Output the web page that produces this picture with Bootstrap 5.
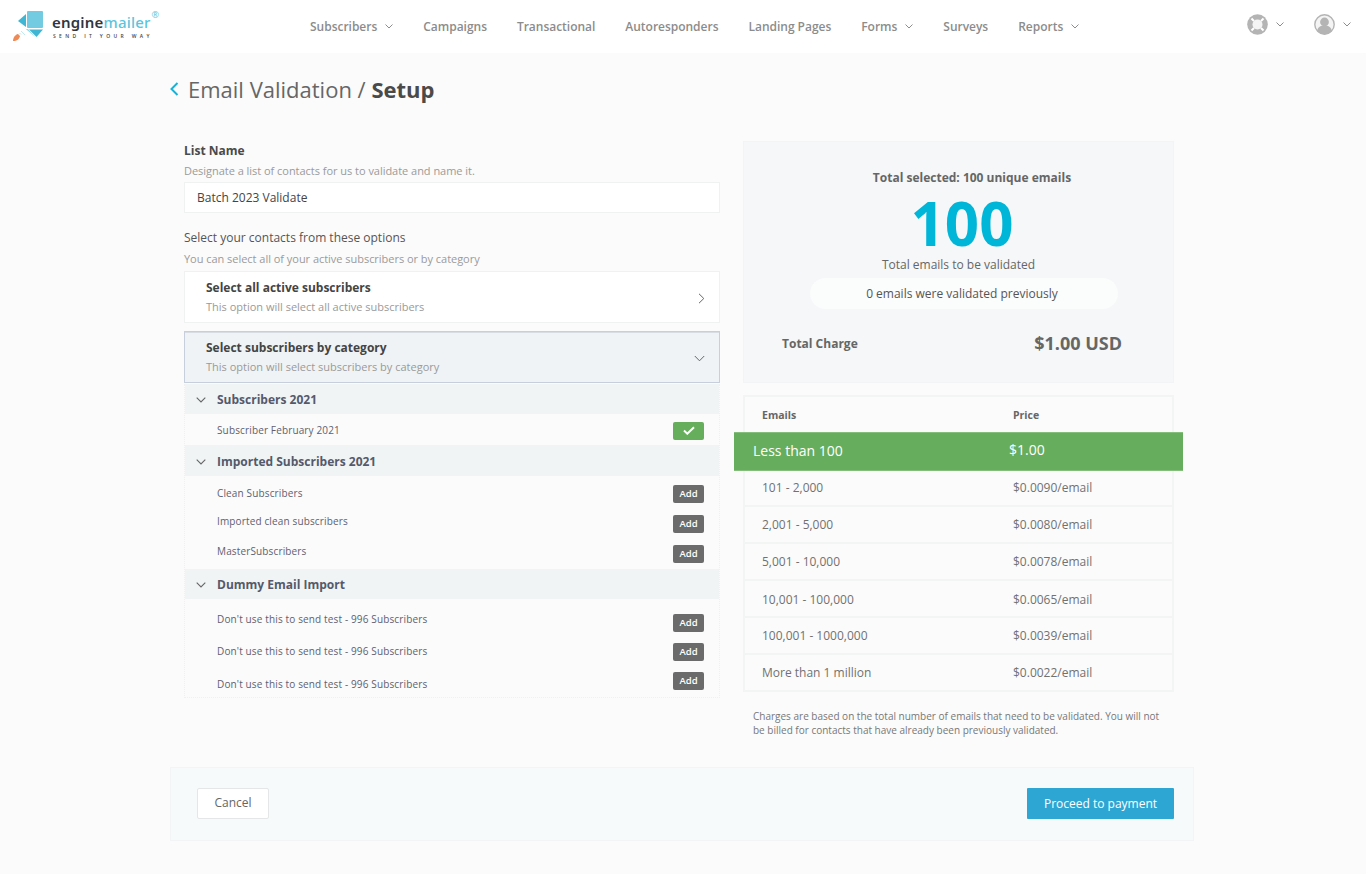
<!DOCTYPE html>
<html lang="en">
<head>
<meta charset="utf-8">
<title>Email Validation / Setup</title>
<link rel="stylesheet" href="https://cdn.jsdelivr.net/npm/bootstrap@5.3.0/dist/css/bootstrap.min.css">
<style>
body{background:#fbfbfb;font-family:"Open Sans",sans-serif;color:#555;font-size:12px;min-height:874px}
.em-top{height:53px;background:#fff;padding:0}
.em-brand{width:300px;margin:0;padding:0 0 0 12px;display:flex;align-items:center;height:53px;gap:2px}
.em-wordmark{display:flex;flex-direction:column;position:relative;width:104px;margin-left:3px}
.em-word{font:600 15px/18px "Noto Sans",sans-serif;color:#2f3640;letter-spacing:.2px}
.em-word b{font-weight:500;color:#5cc4dc}
.em-tag{font:600 5px/7px "Open Sans",sans-serif;letter-spacing:3.35px;color:#444;white-space:nowrap;margin:2px 0 0 1px}
.em-reg{position:absolute;right:-3px;top:-3px;font-size:9px;line-height:9px;color:#5cc4dc}
.em-links{gap:30px;margin-left:10px}
.em-links a{font-weight:600;color:#8c8c8c;font-size:12px;padding:0;display:flex;align-items:center;gap:8px;text-decoration:none;letter-spacing:-.02px}
.em-right{margin-left:auto;gap:30px;padding-right:15px;margin-bottom:5px}
.em-page{width:1024px;margin-left:170px}
.em-title{font-size:22px;font-weight:400;color:#666;line-height:32px;margin:20px 0 0;height:32px;gap:9px}
.em-title strong{font-weight:700;color:#4a4a4a}
.em-cols{margin-top:36px;gap:23px;padding-left:14px;padding-right:20px}
.em-left{width:536px}
.em-rightcol{width:431px}
.em-label{font-size:12px;font-weight:700;color:#4a4a4a;line-height:18px;height:18px;margin-top:1px}
.em-hint{font-size:11px;color:#9a9a9a;line-height:16px;letter-spacing:-.03px}
.em-label + .em-hint{margin-top:3px}
.em-input{height:31px;border:1px solid #f0f1f1;border-radius:0;font-size:12px;color:#444;padding:0 12px;background:#fff;margin-top:3px}
.em-pick{font-size:12px;color:#555;line-height:18px;margin-top:16px}
.em-opt{height:52px;background:#fff;border:1px solid #f0f1f1;padding:2px 14px 0 21px;margin-top:4px}
.em-opt.em-open{background:#eff3f5;border:1px solid #c6cfdb;box-shadow:inset 0 1px 0 #d8dde3;margin-top:8px}
.em-opt-t{font-size:12px;font-weight:700;color:#444;line-height:18px}
.em-opt-s{font-size:11px;color:#9a9a9a;line-height:20px}
.em-cats{border:1px dotted #f0f0f0;border-top:0;padding-bottom:2px}
.em-cat{height:30px;background:#f0f4f5;padding:2px 0 0 11px;gap:11px;font-size:12px;font-weight:700;color:#55596b;margin-top:1px}
.em-cat.em-c2{margin-top:0;height:31px}
.em-cat.em-c3{margin-top:0;height:30px}
.em-item{height:30px;padding:0 15px 0 32px;font-size:10px;color:#5e6070;letter-spacing:.14px}
.em-item.em-first{height:31px;padding-top:2px}
.em-group{padding-top:3px}
.em-group2{padding-top:9px}
.em-group2 .em-item{height:29px}
.em-tag-btn{width:31px;height:18px;padding:0;border:0;border-radius:2px;background:#6b6b6b;color:#fff;font-size:9.5px;font-weight:600;line-height:18px;letter-spacing:0}
.em-tag-btn:hover{background:#6b6b6b;color:#fff}
.em-ok{background:#66ad5c;display:flex;align-items:center;justify-content:center}
.em-up1{margin-bottom:2px}
.em-up2{margin-bottom:6px}
.em-up3{margin-bottom:7px}
.em-dn3{margin-top:7px}
.em-sum{height:242px;background:#f5f7f9;border:1px solid #f3f4f6;padding-top:27px;text-align:center}
.em-sel{font-size:12px;font-weight:700;color:#666;line-height:18px;padding-left:27px}
.em-big{font-size:60px;font-weight:700;color:#00b6d8;line-height:60px;margin-top:6px;padding-left:7px}
.em-tot{font-size:12px;color:#666;line-height:16px;margin-top:4px}
.em-pill{width:308px;height:31px;line-height:31px;background:#fbfcfc;border-radius:16px;font-size:12px;color:#555;margin:5px 0 0 66px;padding-right:4px}
.em-charge{margin-top:18px;padding:0 51px 0 38px;height:32px}
.em-charge span{font-size:12px;font-weight:700;color:#666;margin-top:2px}
.em-charge strong{font-size:18px;font-weight:700;color:#666}
.em-table{border:2px solid #f3f5f5;margin-top:12px;height:297px}
.em-th{height:35px;font-size:10.5px;font-weight:700;color:#666;padding:2px 0 0 17px}
.em-c1{width:251px}
.em-hi{height:39px;background:#67ad5e;border-top:1px solid #83bf7b;border-bottom:1px solid #83bf7b;margin:0 -11px;padding:0 0 2px 19px;color:#fff;font-size:14px}
.em-hi .em-c1{width:256px}
.em-hi span:last-child{font-size:14px;margin-bottom:3px}
.em-tr{height:37px;padding-left:17px;font-size:12px;color:#717171;border-bottom:2px solid #f3f5f5}
.em-tr.em-r1{height:36px}
.em-tr.em-r4{padding-top:3px}
.em-tr:last-child{border-bottom:0;height:35px}
.em-note{font-size:10px;line-height:14px;color:#777;padding:17px 8px 0 10px}
.em-foot{height:74px;margin-top:30px;background:#f7fafb;border:1px solid #f2f4f5;padding:0 19px 2px 26px}
.em-cancel{width:72px;height:31px;background:#fff;border:1px solid #e4e6e7;border-radius:2px;font-size:12px;color:#666;padding:0;line-height:28px}
.em-go{width:147px;height:31px;background:#2ea6d3;border:0;border-radius:1px;color:#fff;font-size:12px;font-weight:400;padding:0;line-height:29px}
.em-go:hover{background:#2ea6d3;color:#fff}
</style>
</head>
<body>
<nav class="navbar navbar-expand em-top d-flex flex-nowrap align-items-center">
  <a class="navbar-brand em-brand text-decoration-none" href="#">
    <svg width="35" height="36" viewBox="0 0 35 36" aria-hidden="true">
      <rect x="15" y="2" width="16" height="17" rx="1" fill="#72cbe0"/>
      <path d="M6 12 14 5v13z" fill="#3fb6d3"/>
      <path d="M7 14 14 20h2l7 8z" fill="#8fd7e7"/>
      <path d="M17 20.500h14L24.500 28z" fill="#3fb6d3"/>
      <path d="M1 32c0-3 2-6.500 5-7l2 2c-.500 3-3 5-7 5z" fill="#f08a55"/>
      <path d="M9 22l4 4M7.500 24l1.500 1.500" stroke="#bfe8f1" stroke-width="1"/>
    </svg>
    <span class="em-wordmark"><span class="em-word">engine<b>mailer</b></span><span class="em-tag">SEND IT YOUR WAY</span><span class="em-reg">®</span></span>
  </a>
  <div class="navbar-nav em-links d-flex flex-row align-items-center">
    <a href="#">Subscribers <svg width="8" height="5" viewBox="0 0 8 5"><path d="M.5.500 4 4 7.500.500" fill="none" stroke="#8c8c8c"/></svg></a>
    <a href="#">Campaigns</a>
    <a href="#">Transactional</a>
    <a href="#">Autoresponders</a>
    <a href="#">Landing Pages</a>
    <a href="#">Forms <svg width="8" height="5" viewBox="0 0 8 5"><path d="M.5.500 4 4 7.500.500" fill="none" stroke="#8c8c8c"/></svg></a>
    <a href="#">Surveys</a>
    <a href="#">Reports <svg width="8" height="5" viewBox="0 0 8 5"><path d="M.5.500 4 4 7.500.500" fill="none" stroke="#8c8c8c"/></svg></a>
  </div>
  <div class="d-flex em-right align-items-center">
    <div class="d-flex align-items-center gap-2">
      <svg width="21" height="21" viewBox="0 0 21 21"><circle cx="10.500" cy="10.500" r="10.300" fill="#b4b4b4"/><circle cx="10.500" cy="10.500" r="5" fill="#f4f4f4"/><path d="M4.500 4.500 7 7M16.500 4.500 14 7M4.500 16.500 7 14M16.500 16.500 14 14" stroke="#fff" stroke-width="2"/></svg>
      <svg width="8" height="5" viewBox="0 0 8 5"><path d="M.5.500 4 4 7.500.500" fill="none" stroke="#8c8c8c"/></svg>
    </div>
    <div class="d-flex align-items-center gap-2">
      <svg width="21" height="21" viewBox="0 0 21 21"><circle cx="10.500" cy="10.500" r="9.700" fill="#f4f4f4" stroke="#b4b4b4" stroke-width="1.400"/><circle cx="10.500" cy="8" r="4.400" fill="#b4b4b4"/><path d="M3.300 17c0-3.500 3-5.500 7.200-5.500s7.200 2 7.200 5.500a9.500 9.500 0 0 1-14.400 0z" fill="#b4b4b4"/></svg>
      <svg width="8" height="5" viewBox="0 0 8 5"><path d="M.5.500 4 4 7.500.500" fill="none" stroke="#8c8c8c"/></svg>
    </div>
  </div>
</nav>

<main class="em-page">
  <h1 class="em-title d-flex align-items-center">
    <svg width="9" height="14" viewBox="0 0 9 14"><path d="M7.500 1 1.500 7l6 6" fill="none" stroke="#17b3d6" stroke-width="2"/></svg>
    <span>Email Validation / <strong>Setup</strong></span>
  </h1>

  <div class="d-flex em-cols">
    <section class="em-left">
      <div class="em-label">List Name</div>
      <div class="em-hint">Designate a list of contacts for us to validate and name it.</div>
      <input class="form-control em-input" value="Batch 2023 Validate">
      <div class="em-pick">Select your contacts from these options</div>
      <div class="em-hint mt-1">You can select all of your active subscribers or by category</div>
      <div class="em-opt d-flex align-items-center justify-content-between">
        <div><div class="em-opt-t">Select all active subscribers</div><div class="em-opt-s">This option will select all active subscribers</div></div>
        <svg width="7" height="11" viewBox="0 0 7 11"><path d="M1 .8 5.800 5.500 1 10.200" fill="none" stroke="#666"/></svg>
      </div>
      <div class="em-opt em-open d-flex align-items-center justify-content-between">
        <div><div class="em-opt-t">Select subscribers by category</div><div class="em-opt-s">This option will select subscribers by category</div></div>
        <svg width="11" height="7" viewBox="0 0 11 7"><path d="M.8 1 5.500 5.800 10.200 1" fill="none" stroke="#666"/></svg>
      </div>
      <div class="em-cats">
        <div class="em-cat d-flex align-items-center"><svg width="10" height="6" viewBox="0 0 10 6"><path d="M.7.700 5 5 9.300.700" fill="none" stroke="#666" stroke-width="1.100"/></svg>Subscribers 2021</div>
        <div class="em-item em-first d-flex align-items-center justify-content-between"><span>Subscriber February 2021</span><span class="em-tag-btn em-ok"><svg width="12" height="9" viewBox="0 0 12 9"><path d="M1 4.500 4.300 7.700 11 1.200" fill="none" stroke="#fff" stroke-width="2"/></svg></span></div>
        <div class="em-cat em-c2 d-flex align-items-center"><svg width="10" height="6" viewBox="0 0 10 6"><path d="M.7.700 5 5 9.300.700" fill="none" stroke="#666" stroke-width="1.100"/></svg>Imported Subscribers 2021</div>
        <div class="em-group">
          <div class="em-item d-flex align-items-center justify-content-between"><span class="em-up1">Clean Subscribers</span><button class="btn em-tag-btn" type="button">Add</button></div>
          <div class="em-item d-flex align-items-center justify-content-between"><span class="em-up2">Imported clean subscribers</span><button class="btn em-tag-btn" type="button">Add</button></div>
          <div class="em-item d-flex align-items-center justify-content-between"><span class="em-up2">MasterSubscribers</span><button class="btn em-tag-btn" type="button">Add</button></div>
        </div>
        <div class="em-cat em-c3 d-flex align-items-center"><svg width="10" height="6" viewBox="0 0 10 6"><path d="M.7.700 5 5 9.300.700" fill="none" stroke="#666" stroke-width="1.100"/></svg>Dummy Email Import</div>
        <div class="em-group2">
          <div class="em-item d-flex align-items-center justify-content-between"><span class="em-up3">Don't use this to send test - 996 Subscribers</span><button class="btn em-tag-btn" type="button">Add</button></div>
          <div class="em-item d-flex align-items-center justify-content-between"><span>Don't use this to send test - 996 Subscribers</span><button class="btn em-tag-btn" type="button">Add</button></div>
          <div class="em-item d-flex align-items-center justify-content-between"><span class="em-dn3">Don't use this to send test - 996 Subscribers</span><button class="btn em-tag-btn" type="button">Add</button></div>
        </div>
      </div>
    </section>

    <section class="em-rightcol">
      <div class="em-sum">
        <div class="em-sel">Total selected: 100 unique emails</div>
        <div class="em-big">100</div>
        <div class="em-tot">Total emails to be validated</div>
        <div class="em-pill">0 emails were validated previously</div>
        <div class="em-charge d-flex align-items-center justify-content-between"><span>Total Charge</span><strong>$1.00 USD</strong></div>
      </div>
      <div class="em-table">
        <div class="em-th d-flex align-items-center"><span class="em-c1">Emails</span><span>Price</span></div>
        <div class="em-hi d-flex align-items-center"><span class="em-c1">Less than 100</span><span>$1.00</span></div>
        <div class="em-tr em-r1 d-flex align-items-center"><span class="em-c1">101 - 2,000</span><span>$0.0090/email</span></div>
        <div class="em-tr d-flex align-items-center"><span class="em-c1">2,001 - 5,000</span><span>$0.0080/email</span></div>
        <div class="em-tr d-flex align-items-center"><span class="em-c1">5,001 - 10,000</span><span>$0.0078/email</span></div>
        <div class="em-tr em-r4 d-flex align-items-center"><span class="em-c1">10,001 - 100,000</span><span>$0.0065/email</span></div>
        <div class="em-tr d-flex align-items-center"><span class="em-c1">100,001 - 1000,000</span><span>$0.0039/email</span></div>
        <div class="em-tr d-flex align-items-center"><span class="em-c1">More than 1 million</span><span>$0.0022/email</span></div>
      </div>
      <p class="em-note mb-0">Charges are based on the total number of emails that need to be validated. You will not be billed for contacts that have already been previously validated.</p>
    </section>
  </div>

  <div class="em-foot d-flex align-items-center justify-content-between">
    <button class="btn em-cancel" type="button">Cancel</button>
    <button class="btn em-go" type="button">Proceed to payment</button>
  </div>
</main>
<script src="https://cdn.jsdelivr.net/npm/bootstrap@5.3.0/dist/js/bootstrap.bundle.min.js"></script>
</body>
</html>
